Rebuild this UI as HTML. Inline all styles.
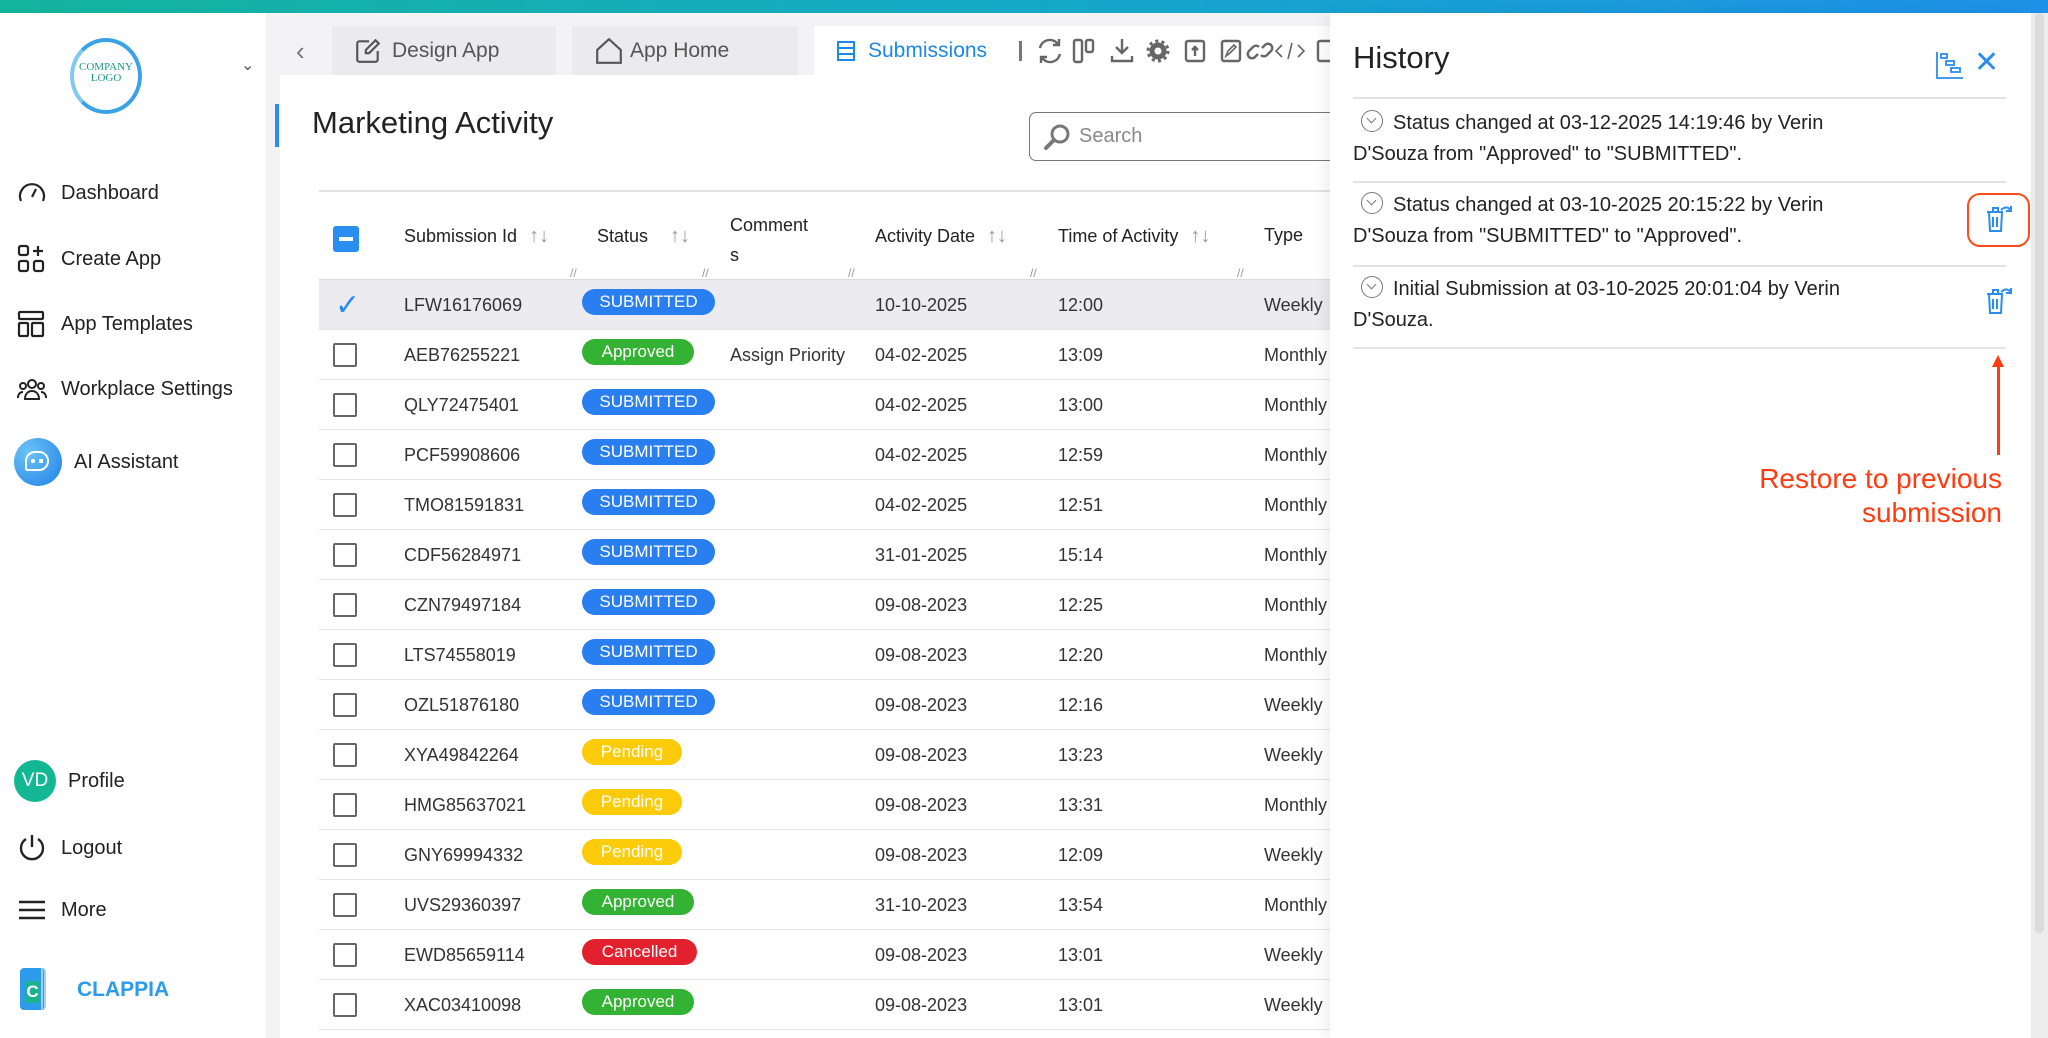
<!DOCTYPE html>
<html style="background:#fff"><head><meta charset="utf-8"><style>
*{box-sizing:border-box;margin:0;padding:0}
body{width:2048px;height:1038px;overflow:hidden;position:relative;background:#f3f3f5;font-family:"Liberation Sans",sans-serif;color:#222}
.a{position:absolute}
.top{left:0;top:0;width:2048px;height:13px;background:linear-gradient(90deg,#14b39c,#14a9c8 50%,#1e90e8)}
.side{left:0;top:13px;width:266px;height:1025px;background:#fff}
.nav{left:16px;font-size:20px;color:#222;display:flex;align-items:center;gap:13px}
.nav svg{width:32px;height:32px}
.tab{top:26px;height:49px;background:#ebebed;font-size:21px;color:#555;display:flex;align-items:center;gap:10px;padding-left:22px}
.card{left:280px;top:75px;width:1060px;height:963px;background:#fff}
.row{left:319px;width:1020px;height:50px;border-bottom:1.5px solid #e6e6e6;font-size:18px;color:#333}
.row span{position:absolute;top:15px}
.cb{position:absolute;left:14px;top:13px;width:24px;height:24px;border:2.5px solid #666;border-radius:2px}
.b{position:absolute;left:263px;top:9px;height:26px;border-radius:13px;color:#fff;font-size:17px;line-height:26px;text-align:center}
.S{background:#2a7ff0;width:133px}.P{background:#fccc0a;width:100px}.A{background:#34b233;width:112px}.C{background:#e2202e;width:115px}
.h{top:225px;font-size:18px;color:#222}
.h i{font-style:normal;color:#999;font-size:20px;margin-left:12px}
.hist{left:1330px;top:13px;width:701px;height:1025px;background:#fff;box-shadow:-6px 0 12px rgba(0,0,0,.06)}
.ent{left:1353px;width:650px;font-size:20px;line-height:31px;color:#222}
.sep{left:1353px;width:653px;height:1.5px;background:#e4e4e4}
.cc{display:inline-block;width:22px;height:22px;border:1.5px solid #777;border-radius:50%;vertical-align:-3px;margin:0 10px 0 8px;position:relative}
.cc:after{content:"";position:absolute;left:6px;top:4px;width:6px;height:6px;border-right:1.5px solid #777;border-bottom:1.5px solid #777;transform:rotate(45deg)}
</style></head><body>
<div class="a top"></div>
<div class="a side"></div>
<!-- logo -->
<div class="a" style="left:70px;top:38px;width:72px;height:76px;border-radius:50%;border:4px solid #3aa3e8;border-left-color:#7fc8f0;"></div>
<div class="a" style="left:74px;top:62px;width:64px;text-align:center;font-family:'Liberation Serif',serif;font-size:11px;line-height:11px;color:#1a9a8a">COMPANY<br>LOGO</div>
<div class="a" style="left:241px;top:55px;font-size:16px;color:#555">&#8964;</div>
<div class="a nav" style="top:177px"><svg viewBox="0 0 32 32" fill="none" stroke="#222" stroke-width="2.2"><path d="M5 24A12 12 0 1 1 27 24"/><path d="M16 20l4-8"/></svg>Dashboard</div>
<div class="a nav" style="top:243px"><svg viewBox="0 0 32 32" fill="none" stroke="#222" stroke-width="2.2"><rect x="3" y="3" width="9" height="9" rx="2"/><rect x="3" y="18" width="9" height="10" rx="2"/><rect x="18" y="18" width="9" height="10" rx="2"/><path d="M22 3v10M17 8h10"/></svg>Create App</div>
<div class="a nav" style="top:308px"><svg viewBox="0 0 32 32" fill="none" stroke="#222" stroke-width="2.2"><rect x="3" y="4" width="24" height="7" rx="1"/><rect x="3" y="15" width="9" height="13" rx="1"/><rect x="16" y="15" width="11" height="13" rx="1"/></svg>App Templates</div>
<div class="a nav" style="top:373px"><svg viewBox="0 0 32 32" fill="none" stroke="#222" stroke-width="2"><circle cx="16" cy="11" r="4"/><circle cx="7" cy="13" r="3"/><circle cx="25" cy="13" r="3"/><path d="M9 26c0-5 3-8 7-8s7 3 7 8zM2 25c0-4 2-6 5-6M30 25c0-4-2-6-5-6"/></svg>Workplace Settings</div>
<div class="a nav" style="top:438px;left:14px;gap:12px"><div style="width:48px;height:48px;border-radius:50%;background:radial-gradient(circle at 30% 30%,#6cc3f7,#2180e6);position:relative"><div style="position:absolute;left:11px;top:13px;width:24px;height:20px;border:2.5px solid #fff;border-radius:11px 11px 11px 3px"></div><div style="position:absolute;left:17px;top:21px;width:12px;height:4px;border-left:4px dotted #fff;border-right:4px solid #fff"></div></div>AI Assistant</div>
<div class="a nav" style="top:760px;left:14px;gap:12px"><div style="width:42px;height:42px;border-radius:50%;background:#12b894;color:#fff;font-size:19px;line-height:42px;text-align:center">VD</div>Profile</div>
<div class="a nav" style="top:832px"><svg viewBox="0 0 32 32" fill="none" stroke="#222" stroke-width="2.4"><path d="M10 7A11 11 0 1 0 22 7"/><path d="M16 3v12"/></svg>Logout</div>
<div class="a nav" style="top:894px"><svg viewBox="0 0 32 32" fill="none" stroke="#222" stroke-width="2.4"><path d="M3 8h26M3 16h26M3 24h26"/></svg>More</div>
<div class="a" style="left:20px;top:968px;width:26px;height:42px;background:#2c9be9;border-radius:4px;border-right:5px double #9fd2f5"></div>
<div class="a" style="left:25px;top:981px;width:15px;height:22px;background:#1bb38f;color:#fff;font-weight:bold;font-size:17px;line-height:22px;text-align:center">C</div>
<div class="a" style="left:77px;top:978px;font-size:21px;font-weight:bold;color:#2c9be9">CLAPPIA</div>

<!-- tabs -->
<div class="a" style="left:296px;top:36px;font-size:26px;color:#777">&#8249;</div>
<div class="a tab" style="left:332px;width:224px"><svg width="28" height="28" viewBox="0 0 26 26" fill="none" stroke="#555" stroke-width="2"><path d="M14 4H5a2 2 0 0 0-2 2v15a2 2 0 0 0 2 2h15a2 2 0 0 0 2-2v-8"/><path d="M20 3l3 3-9 9h-3v-3z"/></svg>Design App</div>
<div class="a tab" style="left:572px;width:226px;gap:6px"><svg width="30" height="30" viewBox="0 0 28 28" fill="none" stroke="#555" stroke-width="2"><path d="M3 13L14 3l11 10v12H3z"/></svg>App Home</div>
<div class="a tab" style="left:814px;width:204px;background:#fff;color:#1e88e5;gap:12px"><svg width="20" height="22" viewBox="0 0 20 22" fill="none" stroke="#1e88e5" stroke-width="2"><rect x="2" y="2" width="16" height="18"/><path d="M2 8h16M2 14h16"/></svg>Submissions</div>
<div class="a" style="left:1018px;top:26px;width:312px;height:49px;background:#fff"></div>
<div class="a" style="left:1019px;top:41px;width:3px;height:20px;background:#777"></div>
<svg class="a" style="left:1034px;top:36px" width="300" height="30" viewBox="0 0 300 30" fill="none" stroke="#666" stroke-width="2.4">
<path d="M6 12a10 10 0 0 1 17-5l2 2M26 18a10 10 0 0 1-17 5l-2-2M25 3v6h-6M7 27v-6h6"/>
<rect x="40" y="4" width="8" height="22" rx="2"/><rect x="52" y="4" width="7" height="12" rx="2"/>
<path d="M88 3v14M82 11l6 6 6-6M78 20v5h20v-5"/>
<circle cx="124" cy="15" r="6" stroke-width="5"/><circle cx="124" cy="15" r="10" stroke-width="3" stroke-dasharray="3 3.3"/>
<rect x="152" y="5" width="18" height="20" rx="2"/><path d="M161 20v-9M158 14l3-3 3 3"/>
<rect x="188" y="5" width="18" height="20" rx="2"/><path d="M192 20l2-5 6-6 2 2-6 6z" stroke-width="1.6"/>
<path d="M224 18l-3 3a4 4 0 0 1-6-6l4-4a4 4 0 0 1 6 0M228 12l3-3a4 4 0 0 1 6 6l-4 4a4 4 0 0 1-6 0" />
<path d="M248 9l-6 6 6 6M264 9l6 6-6 6M258 7l-4 16" stroke-width="1.6"/>
<rect x="284" y="5" width="14" height="20" rx="2"/>
</svg>

<!-- card -->
<div class="a card"></div>
<div class="a" style="left:275px;top:104px;width:4px;height:43px;background:#2a8df0"></div>
<div class="a" style="left:312px;top:105px;font-size:31px;color:#222">Marketing Activity</div>
<div class="a" style="left:1029px;top:112px;width:320px;height:49px;border:1.5px solid #777;border-radius:7px"></div>
<svg class="a" style="left:1042px;top:122px" width="30" height="30" viewBox="0 0 30 30" fill="none" stroke="#777" stroke-width="3"><circle cx="18" cy="12" r="8"/><path d="M12 18l-8 8" stroke-linecap="round" stroke-width="4"/></svg>
<div class="a" style="left:1079px;top:125px;font-size:20px;color:#888">Search</div>
<div class="a" style="left:319px;top:190px;width:1020px;height:1.5px;background:#e2e2e2"></div>
<div class="a" style="left:319px;top:279px;width:1020px;height:1.5px;background:#dcdcdc"></div>
<div class="a" style="left:333px;top:226px;width:26px;height:26px;background:#2a8df0;border-radius:3px"><div style="margin:11px 6px;height:4px;background:#fff"></div></div>
<div class="a h" style="left:404px">Submission Id<i>↑↓</i></div>
<div class="a h" style="left:597px">Status<i style="margin-left:22px">↑↓</i></div>
<div class="a h" style="left:730px;top:210px;line-height:30px">Comment<br>s</div>
<div class="a h" style="left:875px">Activity Date<i>↑↓</i></div>
<div class="a h" style="left:1058px">Time of Activity<i>↑↓</i></div>
<div class="a h" style="left:1264px">Type</div>
<div class="a" style="left:570px;top:266px;color:#999;font-size:12px">//</div>
<div class="a" style="left:702px;top:266px;color:#999;font-size:12px">//</div>
<div class="a" style="left:848px;top:266px;color:#999;font-size:12px">//</div>
<div class="a" style="left:1030px;top:266px;color:#999;font-size:12px">//</div>
<div class="a" style="left:1237px;top:266px;color:#999;font-size:12px">//</div>

<div class="a row" style="top:280px;background:#ececf0"><span style="left:16px;top:8px;font-size:30px;color:#2a8df0">✓</span><span style="left:85px">LFW16176069</span><div class="b S">SUBMITTED</div><span style="left:556px">10-10-2025</span><span style="left:739px">12:00</span><span style="left:945px">Weekly</span></div>
<div class="a row" style="top:330px"><div class="cb"></div><span style="left:85px">AEB76255221</span><div class="b A">Approved</div><span style="left:411px">Assign Priority</span><span style="left:556px">04-02-2025</span><span style="left:739px">13:09</span><span style="left:945px">Monthly</span></div>
<div class="a row" style="top:380px"><div class="cb"></div><span style="left:85px">QLY72475401</span><div class="b S">SUBMITTED</div><span style="left:556px">04-02-2025</span><span style="left:739px">13:00</span><span style="left:945px">Monthly</span></div>
<div class="a row" style="top:430px"><div class="cb"></div><span style="left:85px">PCF59908606</span><div class="b S">SUBMITTED</div><span style="left:556px">04-02-2025</span><span style="left:739px">12:59</span><span style="left:945px">Monthly</span></div>
<div class="a row" style="top:480px"><div class="cb"></div><span style="left:85px">TMO81591831</span><div class="b S">SUBMITTED</div><span style="left:556px">04-02-2025</span><span style="left:739px">12:51</span><span style="left:945px">Monthly</span></div>
<div class="a row" style="top:530px"><div class="cb"></div><span style="left:85px">CDF56284971</span><div class="b S">SUBMITTED</div><span style="left:556px">31-01-2025</span><span style="left:739px">15:14</span><span style="left:945px">Monthly</span></div>
<div class="a row" style="top:580px"><div class="cb"></div><span style="left:85px">CZN79497184</span><div class="b S">SUBMITTED</div><span style="left:556px">09-08-2023</span><span style="left:739px">12:25</span><span style="left:945px">Monthly</span></div>
<div class="a row" style="top:630px"><div class="cb"></div><span style="left:85px">LTS74558019</span><div class="b S">SUBMITTED</div><span style="left:556px">09-08-2023</span><span style="left:739px">12:20</span><span style="left:945px">Monthly</span></div>
<div class="a row" style="top:680px"><div class="cb"></div><span style="left:85px">OZL51876180</span><div class="b S">SUBMITTED</div><span style="left:556px">09-08-2023</span><span style="left:739px">12:16</span><span style="left:945px">Weekly</span></div>
<div class="a row" style="top:730px"><div class="cb"></div><span style="left:85px">XYA49842264</span><div class="b P">Pending</div><span style="left:556px">09-08-2023</span><span style="left:739px">13:23</span><span style="left:945px">Weekly</span></div>
<div class="a row" style="top:780px"><div class="cb"></div><span style="left:85px">HMG85637021</span><div class="b P">Pending</div><span style="left:556px">09-08-2023</span><span style="left:739px">13:31</span><span style="left:945px">Monthly</span></div>
<div class="a row" style="top:830px"><div class="cb"></div><span style="left:85px">GNY69994332</span><div class="b P">Pending</div><span style="left:556px">09-08-2023</span><span style="left:739px">12:09</span><span style="left:945px">Weekly</span></div>
<div class="a row" style="top:880px"><div class="cb"></div><span style="left:85px">UVS29360397</span><div class="b A">Approved</div><span style="left:556px">31-10-2023</span><span style="left:739px">13:54</span><span style="left:945px">Monthly</span></div>
<div class="a row" style="top:930px"><div class="cb"></div><span style="left:85px">EWD85659114</span><div class="b C">Cancelled</div><span style="left:556px">09-08-2023</span><span style="left:739px">13:01</span><span style="left:945px">Weekly</span></div>
<div class="a row" style="top:980px"><div class="cb"></div><span style="left:85px">XAC03410098</span><div class="b A">Approved</div><span style="left:556px">09-08-2023</span><span style="left:739px">13:01</span><span style="left:945px">Weekly</span></div>
<div class="a row" style="top:1030px;height:8px;overflow:hidden;border:0"><div class="b A"></div></div>

<!-- history -->
<div class="a hist"></div>
<div class="a" style="left:2031px;top:13px;width:17px;height:1025px;background:#ededed"><div style="margin:0 4px;height:920px;background:#dcdcdc;border-radius:4px"></div></div>
<div class="a" style="left:1353px;top:40px;font-size:31px;color:#222">History</div>
<svg class="a" style="left:1935px;top:50px" width="30" height="30" viewBox="0 0 30 30" fill="none" stroke="#2a8df0" stroke-width="1.8"><path d="M2 2v26h26"/><rect x="6" y="4" width="6" height="4"/><rect x="11" y="11" width="8" height="4"/><rect x="16" y="18" width="9" height="4"/></svg>
<div class="a" style="left:1974px;top:45px;font-size:30px;color:#2a8df0">✕</div>
<div class="a sep" style="top:97px"></div>
<div class="a ent" style="top:108px"><span class="cc"></span>Status changed at 03-12-2025 14:19:46 by Verin<br>D'Souza from "Approved" to "SUBMITTED".</div>
<div class="a sep" style="top:181px"></div>
<div class="a ent" style="top:190px"><span class="cc"></span>Status changed at 03-10-2025 20:15:22 by Verin<br>D'Souza from "SUBMITTED" to "Approved".</div>
<div class="a sep" style="top:265px"></div>
<div class="a ent" style="top:274px"><span class="cc"></span>Initial Submission at 03-10-2025 20:01:04 by Verin<br>D'Souza.</div>
<div class="a sep" style="top:347px"></div>
<div class="a" style="left:1967px;top:193px;width:63px;height:54px;border:2.5px solid #ff4a1a;border-radius:13px"></div>
<svg class="a" style="left:1983px;top:203px" width="30" height="32" viewBox="0 0 30 32" fill="none" stroke="#2a8df0" stroke-width="2"><path d="M4 9h16M6 9l1 19h11l1-19M10 9V5h5v4M10 14v10M14 14v10M18 7c4-4 8-3 10 1M28 3v5h-5"/></svg>
<svg class="a" style="left:1983px;top:285px" width="30" height="32" viewBox="0 0 30 32" fill="none" stroke="#2a8df0" stroke-width="2"><path d="M4 9h16M6 9l1 19h11l1-19M10 9V5h5v4M10 14v10M14 14v10M18 7c4-4 8-3 10 1M28 3v5h-5"/></svg>
<div class="a" style="left:1997px;top:364px;width:2.5px;height:91px;background:#ff3b12"></div>
<div class="a" style="left:1992px;top:355px;width:0;height:0;border-left:6px solid transparent;border-right:6px solid transparent;border-bottom:12px solid #ff3b12"></div>
<div class="a" style="left:1600px;top:462px;width:402px;text-align:right;font-size:28px;line-height:34px;color:#ff3b12">Restore to previous<br>submission</div>
</body></html>
